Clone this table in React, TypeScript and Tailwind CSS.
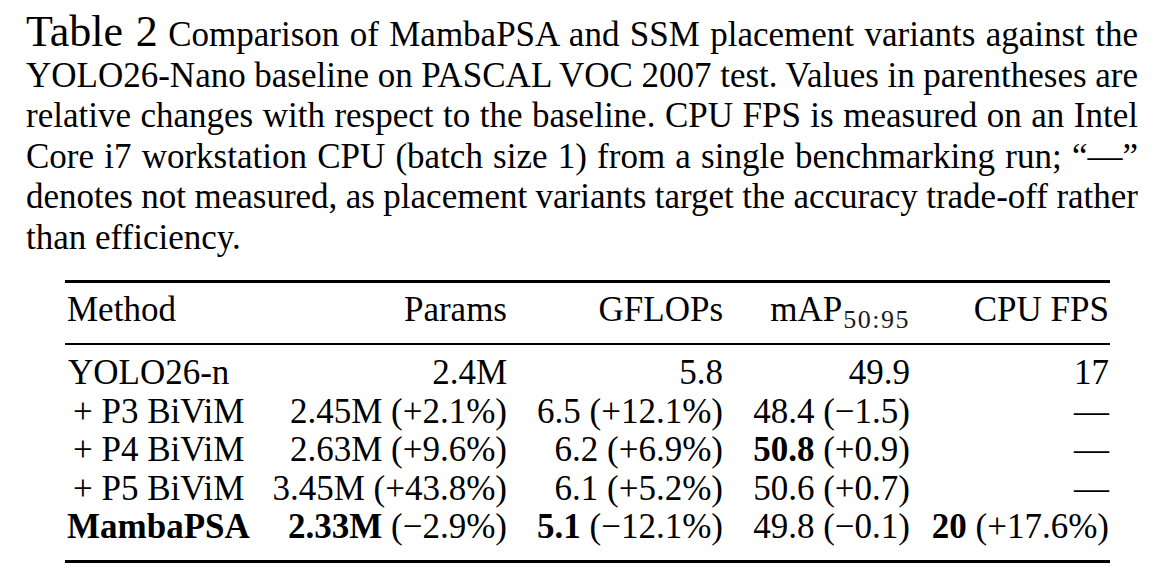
import React from "react";

type Val = { b?: string; t?: string };

const rows: { method: string; bold?: boolean; sub?: boolean; cells: Val[] }[] = [
  {
    method: "YOLO26-n",
    cells: [{ t: "2.4M" }, { t: "5.8" }, { t: "49.9" }, { t: "17" }],
  },
  {
    method: "+ P3 BiViM",
    sub: true,
    cells: [{ t: "2.45M (+2.1%)" }, { t: "6.5 (+12.1%)" }, { t: "48.4 (\u22121.5)" }, { t: "\u2014" }],
  },
  {
    method: "+ P4 BiViM",
    sub: true,
    cells: [{ t: "2.63M (+9.6%)" }, { t: "6.2 (+6.9%)" }, { b: "50.8", t: " (+0.9)" }, { t: "\u2014" }],
  },
  {
    method: "+ P5 BiViM",
    sub: true,
    cells: [{ t: "3.45M (+43.8%)" }, { t: "6.1 (+5.2%)" }, { t: "50.6 (+0.7)" }, { t: "\u2014" }],
  },
  {
    method: "MambaPSA",
    bold: true,
    cells: [
      { b: "2.33M", t: " (\u22122.9%)" },
      { b: "5.1", t: " (\u221212.1%)" },
      { t: "49.8 (\u22120.1)" },
      { b: "20", t: " (+17.6%)" },
    ],
  },
];

// the caption is set line by line, justified like the typeset original
const captionLines = [
  "YOLO26-Nano baseline on PASCAL VOC 2007 test. Values in parentheses are",
  "relative changes with respect to the baseline. CPU FPS is measured on an Intel",
  "Core i7 workstation CPU (batch size 1) from a single benchmarking run; \u201c\u2014\u201d",
  "denotes not measured, as placement variants target the accuracy trade-off rather",
];

const cols = "grid grid-cols-[195px_247px_216px_187px_200px]";

function Value({ v }: { v: Val }) {
  return (
    <>
      {v.b && <span className="font-bold">{v.b}</span>}
      {v.t}
    </>
  );
}

export default function App() {
  return (
    <div className="min-h-screen bg-white pt-[15px] text-black font-['Liberation_Serif','Times_New_Roman',serif]">
      <div className="w-[1112px] ml-[26px] text-[35px] leading-[40.5px]">
        <div className="text-justify [text-align-last:justify]">
          <span className="text-[44px] leading-[30px]">Table 2</span> Comparison of MambaPSA and SSM placement
          variants against the
        </div>
        {captionLines.map((line) => (
          <div key={line} className="text-justify [text-align-last:justify] [word-spacing:-1px]">
            {line}
          </div>
        ))}
        <div>than efficiency.</div>
      </div>

      <div className="ml-[65px] mt-[22px] w-[1045px] text-[35px] leading-[38.5px]">
        <div className={`border-t-[3px] border-black pt-[8px] pb-[13.5px] ${cols}`}>
          <div className="pl-[2px]">Method</div>
          <div className="text-right">Params</div>
          <div className="text-right">GFLOPs</div>
          <div className="text-right whitespace-nowrap">
            mAP<sub className="text-[26px] tracking-[1.5px] ml-[1px] text-[#1a1a1a]">50:95</sub>
          </div>
          <div className="text-right pr-[1px]">CPU FPS</div>
        </div>
        <div className="border-t-2 border-b-[3px] border-black pt-[9px] pb-[13.5px]">
          {rows.map((r) => (
            <div key={r.method} className={cols}>
              <div className={`whitespace-nowrap ${r.bold ? "font-bold pl-[2px]" : r.sub ? "pl-[8px]" : "pl-[3px]"}`}>
                {r.method}
              </div>
              {r.cells.map((c, i) => (
                <div key={i} className={`text-right whitespace-nowrap ${i === 3 ? "pr-[1px]" : ""}`}>
                  <Value v={c} />
                </div>
              ))}
            </div>
          ))}
        </div>
      </div>
    </div>
  );
}
